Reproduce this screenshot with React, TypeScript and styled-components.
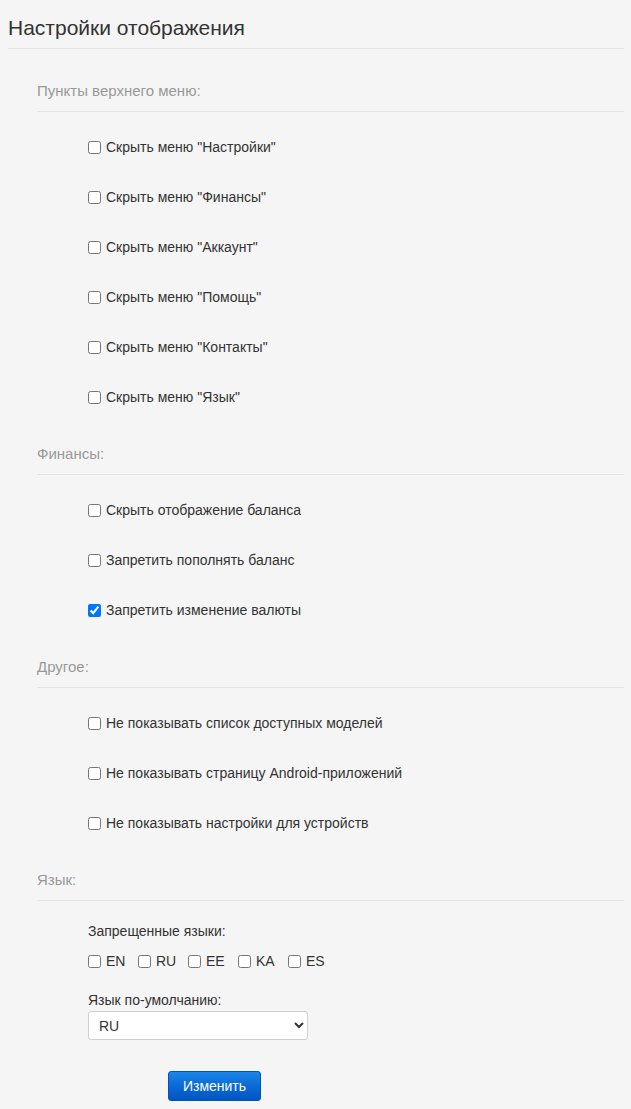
import React from "react";
import styled, { createGlobalStyle } from "styled-components";

const GlobalStyle = createGlobalStyle`
  html, body {
    margin: 0;
    padding: 0;
    background: #f5f5f5;
  }
  body {
    font-family: "Liberation Sans", Arial, sans-serif;
    font-size: 14px;
    color: #333;
  }
`;

const Page = styled.div`
  padding: 0 7px 9px 8px;
  background: #f5f5f5;
`;

const Title = styled.h1`
  margin: 0;
  padding: 16px 0 8px;
  font-size: 21px;
  line-height: 24px;
  font-weight: normal;
  color: #333;
  border-bottom: 1px solid #e3e3e3;
`;

const Body = styled.div`
  padding-left: 29px;
  padding-top: 31px;
`;

const Section = styled.section`
  & + & {
    margin-top: 21px;
  }
`;

const Legend = styled.div`
  font-size: 15px;
  line-height: 21px;
  color: #999;
  padding-bottom: 10px;
  border-bottom: 1px solid #e3e3e3;
`;

const Options = styled.div`
  padding: 10px 0 0 51px;
  display: flex;
  flex-direction: column;
`;

const Row = styled.label`
  height: 50px;
  display: flex;
  align-items: center;
  gap: 5px;
  font-size: 14px;
  color: #333;
`;

const Check = styled.input.attrs({ type: "checkbox" })`
  width: 13px;
  height: 13px;
  margin: 0;
`;

const LangBlock = styled.div`
  padding: 20px 0 0 51px;
  display: flex;
  flex-direction: column;
`;

const FieldLabel = styled.div`
  line-height: 20px;
  color: #333;
`;

const LangList = styled.div`
  display: flex;
  margin-top: 10px;
  margin-bottom: 19px;
`;

const LangItem = styled.label`
  width: 50px;
  display: flex;
  align-items: center;
  gap: 5px;
  line-height: 20px;
`;

const Select = styled.select`
  margin-top: 1px;
  width: 220px;
  height: 29px;
  padding: 0 6px;
  font-family: "Liberation Sans", Arial, sans-serif;
  font-size: 14px;
  color: #333;
  background: #fff;
  border: 1px solid #cfcfcf;
  border-radius: 3px;
`;

const Button = styled.button`
  margin: 31px 0 0 80px;
  align-self: flex-start;
  width: 93px;
  height: 30px;
  font-family: "Liberation Sans", Arial, sans-serif;
  font-size: 14px;
  color: #fff;
  background: linear-gradient(to bottom, #1c86e8 0%, #0a6ad6 50%, #0055c0 100%);
  border: 1px solid #0752b0;
  border-radius: 3px;
  cursor: pointer;
`;

const menus = ["Настройки", "Финансы", "Аккаунт", "Помощь", "Контакты", "Язык"];
const finance: [string, boolean][] = [
  ["Скрыть отображение баланса", false],
  ["Запретить пополнять баланс", false],
  ["Запретить изменение валюты", true],
];
const other = [
  "Не показывать список доступных моделей",
  "Не показывать страницу Android-приложений",
  "Не показывать настройки для устройств",
];
const langs = ["EN", "RU", "EE", "KA", "ES"];

export default function App() {
  return (
    <Page>
      <GlobalStyle />
      <Title>Настройки отображения</Title>
      <Body>
        <Section>
          <Legend>Пункты верхнего меню:</Legend>
          <Options>
            {menus.map((m) => (
              <Row key={m}>
                <Check />
                Скрыть меню "{m}"
              </Row>
            ))}
          </Options>
        </Section>
        <Section>
          <Legend>Финансы:</Legend>
          <Options>
            {finance.map(([t, c]) => (
              <Row key={t}>
                <Check defaultChecked={c} />
                {t}
              </Row>
            ))}
          </Options>
        </Section>
        <Section>
          <Legend>Другое:</Legend>
          <Options>
            {other.map((t) => (
              <Row key={t}>
                <Check />
                {t}
              </Row>
            ))}
          </Options>
        </Section>
        <Section>
          <Legend>Язык:</Legend>
          <LangBlock>
            <FieldLabel>Запрещенные языки:</FieldLabel>
            <LangList>
              {langs.map((l) => (
                <LangItem key={l}>
                  <Check />
                  {l}
                </LangItem>
              ))}
            </LangList>
            <FieldLabel>Язык по-умолчанию:</FieldLabel>
            <Select defaultValue="RU">
              {langs.map((l) => (
                <option key={l} value={l}>
                  {l}
                </option>
              ))}
            </Select>
            <Button type="button">Изменить</Button>
          </LangBlock>
        </Section>
      </Body>
    </Page>
  );
}
